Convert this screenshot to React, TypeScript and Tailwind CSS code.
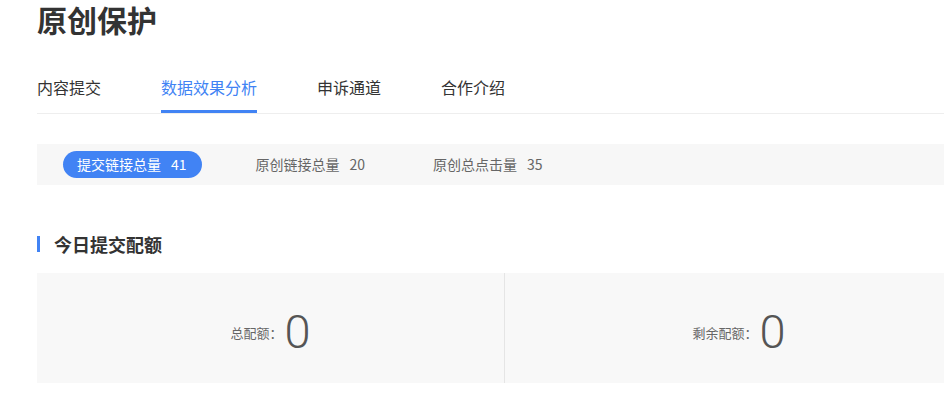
import React from "react";

const font = { fontFamily: '"Microsoft YaHei", "Noto Sans CJK SC", "Liberation Sans", sans-serif' };

export default function App() {
  const tabs = ["内容提交", "数据效果分析", "申诉通道", "合作介绍"];
  return (
    <div className="w-[944px] h-[401px] overflow-hidden bg-white" style={font}>
      <div className="w-[936px] ml-[37px]">
        <h1 className="text-[30px] leading-[38px] font-bold text-[#333]">原创保护</h1>
        <div className="flex mt-[36px] border-b border-[#eeeeee] h-[40px] pt-[2px]">
          {tabs.map((t, i) => (
            <div
              key={t}
              className={`text-[16px] leading-[22px] mr-[60px] relative ${i === 1 ? "text-[#4183f4]" : "text-[#333]"}`}
            >
              {t}
              {i === 1 && <div className="absolute left-0 right-0 top-[34px] h-[3px] bg-[#4183f4]" />}
            </div>
          ))}
        </div>
        <div className="mt-[30px] h-[41px] bg-[#f7f7f7] flex items-center pl-[26px] text-[14px]">
          <div className="h-[27px] rounded-full bg-[#4183f4] text-white flex items-center pl-[14px] pr-[15px]">
            提交链接总量<span className="ml-[10px]">41</span>
          </div>
          <div className="ml-[54px] text-[#666]">
            原创链接总量<span className="ml-[10px]">20</span>
          </div>
          <div className="ml-[68px] text-[#666]">
            原创总点击量<span className="ml-[10px]">35</span>
          </div>
        </div>
        <div className="mt-[51px] flex items-center h-[16px]">
          <div className="w-[3px] h-[16px] bg-[#4183f4]" />
          <div className="ml-[14px] text-[18px] font-bold text-[#333] leading-[20px]">今日提交配额</div>
        </div>
        <div className="mt-[21px] h-[110px] bg-[#f8f8f8] grid grid-cols-2">
          <div className="flex items-center justify-center border-r border-[#e5e5e5]">
            <span className="text-[13px] text-[#666] mt-[10px]">总配额：</span>
            <span className="text-[47px] leading-[47px] text-[#555] font-light mt-[6px] ml-[2px]" style={{ fontFamily: 'Roboto, "Liberation Sans", sans-serif' }}>0</span>
          </div>
          <div className="flex items-center justify-center">
            <span className="text-[13px] text-[#666] mt-[10px]">剩余配额：</span>
            <span className="text-[47px] leading-[47px] text-[#555] font-light mt-[6px] ml-[2px]" style={{ fontFamily: 'Roboto, "Liberation Sans", sans-serif' }}>0</span>
          </div>
        </div>
      </div>
    </div>
  );
}
